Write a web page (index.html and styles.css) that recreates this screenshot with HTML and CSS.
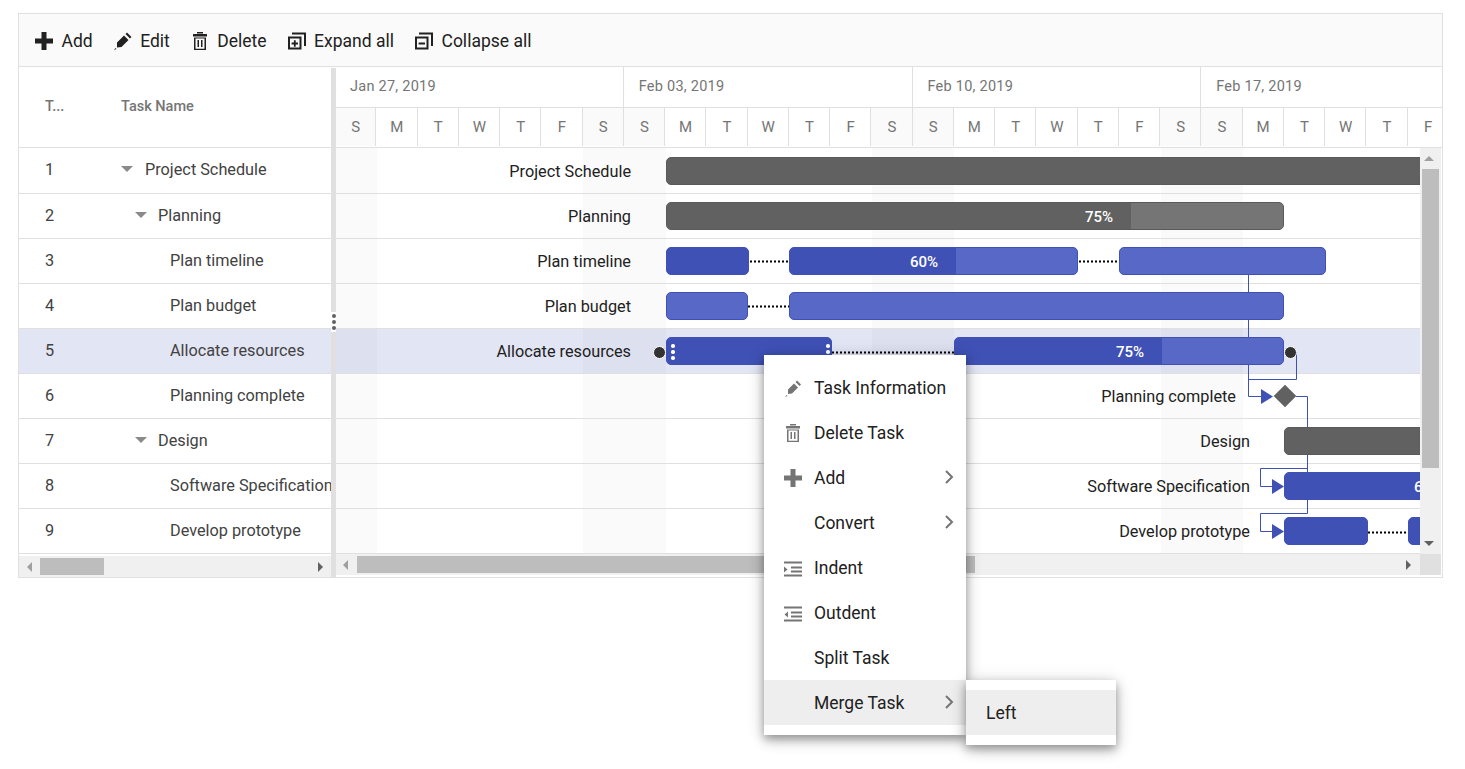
FILE: index.html
```html
<!DOCTYPE html>
<html lang="en">
<head>
<meta charset="utf-8">
<title>Gantt</title>
<link rel="stylesheet" href="styles.css">
</head>
<body>
<div class="gantt">
  <div class="toolbar">
    <div class="tool"><svg class="tool-icon" viewBox="0 0 18 18"><path d="M6.500 0h5v6.500H18v5h-6.500V18h-5v-6.500H0v-5h6.500z"/></svg><span>Add</span></div>
    <div class="tool"><svg class="tool-icon" viewBox="0 0 18 18"><path d="M3 10.500 10 3.500 14.500 8 7.500 15 3 15.500zM11.500 2 13 .500 17.500 5 16 6.500zM0 18l1.500-2 1 1z"/></svg><span>Edit</span></div>
    <div class="tool"><svg class="tool-icon" viewBox="0 0 18 18"><path fill-rule="evenodd" d="M6 0h6v1.500H6zM2 2h14v2.500H2zM3 5.500h12V18H3zM4.500 6.500V16.800h9V6.500zM6.500 8H8v7H6.500zM10 8h1.500v7H10z"/></svg><span>Delete</span></div>
    <div class="tool"><svg class="tool-icon" viewBox="0 0 18 18"><path fill-rule="evenodd" d="M0 4.500h13.500v13H0zM2 6.500v9h9.500v-9zM4 .5h14v13.500h-2V2.500H4zM5.900 8.200h1.800v2.400h2.300v1.800H7.700v2.400H5.900v-2.400H3.600v-1.800h2.300z"/></svg><span>Expand all</span></div>
    <div class="tool"><svg class="tool-icon" viewBox="0 0 18 18"><path fill-rule="evenodd" d="M0 4.500h13.500v13H0zM2 6.500v9h9.500v-9zM4 .5h14v13.500h-2V2.500H4zM3.600 10.600h6.400v1.800H3.600z"/></svg><span>Collapse all</span></div>
  </div>

  <div class="grid-pane">
    <div class="grid-head">
      <div class="col-id">T...</div>
      <div class="col-name">Task Name</div>
    </div>
    <div class="grid-rows">
      <div class="grow first"><div class="col-id">1</div><div class="col-name lvl0"><i class="caret"></i>Project Schedule</div></div>
      <div class="grow"><div class="col-id">2</div><div class="col-name lvl1"><i class="caret"></i>Planning</div></div>
      <div class="grow"><div class="col-id">3</div><div class="col-name lvl2">Plan timeline</div></div>
      <div class="grow"><div class="col-id">4</div><div class="col-name lvl2">Plan budget</div></div>
      <div class="grow selected"><div class="col-id">5</div><div class="col-name lvl2">Allocate resources</div></div>
      <div class="grow"><div class="col-id">6</div><div class="col-name lvl2">Planning complete</div></div>
      <div class="grow"><div class="col-id">7</div><div class="col-name lvl1"><i class="caret"></i>Design</div></div>
      <div class="grow"><div class="col-id">8</div><div class="col-name lvl2">Software Specification</div></div>
      <div class="grow"><div class="col-id">9</div><div class="col-name lvl2">Develop prototype</div></div>
    </div>
    <div class="hscroll grid-scroll">
      <i class="arrow-left"></i>
      <div class="thumb grid-thumb"></div>
      <i class="arrow-right"></i>
    </div>
  </div>

  <div class="splitter"><div class="grip"><b></b><b></b><b></b></div></div>

  <div class="chart-pane">
    <div class="timeline">
      <div class="tier-top">
        <div class="week">Jan 27, 2019</div>
        <div class="week">Feb 03, 2019</div>
        <div class="week">Feb 10, 2019</div>
        <div class="week">Feb 17, 2019</div>
      </div>
      <div class="tier-days">
        <div class="day off">S</div><div class="day">M</div><div class="day">T</div><div class="day">W</div><div class="day">T</div><div class="day">F</div><div class="day off">S</div>
        <div class="day off">S</div><div class="day">M</div><div class="day">T</div><div class="day">W</div><div class="day">T</div><div class="day">F</div><div class="day off">S</div>
        <div class="day off">S</div><div class="day">M</div><div class="day">T</div><div class="day">W</div><div class="day">T</div><div class="day">F</div><div class="day off">S</div>
        <div class="day off">S</div><div class="day">M</div><div class="day">T</div><div class="day">W</div><div class="day">T</div><div class="day">F</div>
      </div>
    </div>

    <div class="chart-body">
      <div class="canvas">
        <div class="weekend" style="left:0;width:41px"></div>
        <div class="weekend" style="left:247px;width:83px"></div>
        <div class="weekend" style="left:536px;width:82px"></div>
        <div class="weekend" style="left:825px;width:82px"></div>

        <div class="crows">
          <div class="crow first"></div><div class="crow"></div><div class="crow"></div><div class="crow"></div>
          <div class="crow selected"></div><div class="crow"></div><div class="crow"></div><div class="crow"></div><div class="crow"></div>
        </div>

        <svg class="links" viewBox="336 148 1084 406" width="1084" height="406">
          <g class="link">
            <path d="M1248.500 275V396.500H1262"/>
            <path d="M1296.500 352V379.500H1248.500"/>
            <path d="M1296 396.500H1307.500V513.500H1260.500V531.500H1273"/>
            <path d="M1307.500 468.500H1260.500V486.500H1273"/>
          </g>
          <g class="arrowheads">
            <path d="M1261 389l12 7.500-12 7.500z"/>
            <path d="M1272 479l12 7.500-12 7.500z"/>
            <path d="M1272 524l12 7.500-12 7.500z"/>
          </g>
          <g class="dots">
            <path d="M750 261.500h39M1079 261.500h40M748 306.500h41M832 352.500h122M1368 532.500h40"/>
          </g>
        </svg>

        <div class="label" style="right:789px;top:13px">Project Schedule</div>
        <div class="label" style="right:789px;top:58px">Planning</div>
        <div class="label" style="right:789px;top:103px">Plan timeline</div>
        <div class="label" style="right:789px;top:148px">Plan budget</div>
        <div class="label on-sel" style="right:789px;top:193px">Allocate resources</div>
        <div class="label" style="right:184px;top:238px">Planning complete</div>
        <div class="label" style="right:170px;top:283px">Design</div>
        <div class="label" style="right:170px;top:328px">Software Specification</div>
        <div class="label" style="right:170px;top:373px">Develop prototype</div>

        <div class="bar parent" style="left:330px;top:9px;width:800px"></div>
        <div class="bar parent rest" style="left:330px;top:54px;width:618px"><div class="fill" style="width:464px">75%</div></div>
        <div class="bar parent" style="left:948px;top:279px;width:500px"></div>

        <div class="bar child done" style="left:330px;top:99px;width:83px"></div>
        <div class="bar child" style="left:453px;top:99px;width:289px"><div class="fill" style="width:166px">60%</div></div>
        <div class="bar child" style="left:783px;top:99px;width:207px"></div>

        <div class="bar child" style="left:330px;top:144px;width:82px"></div>
        <div class="bar child" style="left:453px;top:144px;width:495px"></div>

        <div class="bar child done" style="left:330px;top:189px;width:166px">
          <i class="handle left"><b></b><b></b><b></b></i>
          <i class="handle right"><b></b><b></b><b></b></i>
        </div>
        <div class="bar child" style="left:618px;top:189px;width:330px"><div class="fill" style="width:207px">75%</div></div>

        <div class="bar child" style="left:948px;top:324px;width:400px"><div class="fill" style="width:175px">60%</div></div>
        <div class="bar child done" style="left:948px;top:369px;width:84px"></div>
        <div class="bar child done" style="left:1072px;top:369px;width:100px"></div>

        <div class="milestone" style="left:941px;top:240px"></div>
        <div class="conn" style="left:317px;top:198px"></div>
        <div class="conn" style="left:948px;top:198px"></div>
      </div>

      <div class="vscroll">
        <i class="arrow-up"></i>
        <div class="thumb vthumb"></div>
        <i class="arrow-down"></i>
      </div>
    </div>

    <div class="chart-foot">
      <div class="hscroll chart-scroll">
        <i class="arrow-left"></i>
        <div class="thumb chart-thumb"></div>
        <i class="arrow-right"></i>
      </div>
      <div class="corner"></div>
    </div>
  </div>
</div>

<div class="menu main-menu">
  <div class="mitem"><svg class="micon" viewBox="0 0 18 18"><path d="M4 10.500 10 4.500 14 8.500 8 14.500 4 15zM11.500 3 13 1.500 17 5.500 15.500 7zM1 18l1.500-2 1 1z"/></svg><span class="mtext">Task Information</span></div>
  <div class="mitem"><svg class="micon" viewBox="0 0 18 18"><path fill-rule="evenodd" d="M6 0h6v1.500H6zM2 2h14v2.500H2zM3 5.500h12V18H3zM4.500 6.500V16.800h9V6.500zM6.500 8H8v7H6.500zM10 8h1.500v7H10z"/></svg><span class="mtext">Delete Task</span></div>
  <div class="mitem"><svg class="micon" viewBox="0 0 18 18"><path d="M6.500 0h5v6.500H18v5h-6.500V18h-5v-6.500H0v-5h6.500z"/></svg><span class="mtext">Add</span><svg class="chev" viewBox="0 0 9 14"><path d="M1 1l6 6-6 6"/></svg></div>
  <div class="mitem"><span class="micon"></span><span class="mtext">Convert</span><svg class="chev" viewBox="0 0 9 14"><path d="M1 1l6 6-6 6"/></svg></div>
  <div class="mitem"><svg class="micon" viewBox="0 0 18 18"><path d="M0 2.500h18v2H0zM7 7.500h11v2H7zM7 11.500h11v2H7zM0 15.500h18v2H0zM0 7.500l3.500 3L0 13.500z"/></svg><span class="mtext">Indent</span></div>
  <div class="mitem"><svg class="micon" viewBox="0 0 18 18"><path d="M0 2.500h18v2H0zM7 7.500h11v2H7zM7 11.500h11v2H7zM0 15.500h18v2H0zM4 7.500.5 10.500 4 13.500z"/></svg><span class="mtext">Outdent</span></div>
  <div class="mitem"><span class="micon"></span><span class="mtext">Split Task</span></div>
  <div class="mitem hover"><span class="micon"></span><span class="mtext">Merge Task</span><svg class="chev" viewBox="0 0 9 14"><path d="M1 1l6 6-6 6"/></svg></div>
</div>
<div class="menu sub-menu">
  <div class="mitem hover sub-item"><span class="mtext">Left</span></div>
</div>
</body>
</html>
```

FILE: styles.css
```css
* { box-sizing: border-box; }
html, body { margin: 0; padding: 0; background: #fff; }
body {
  position: relative;
  height: 769px;
  overflow: hidden;
  padding: 13px 22px 0 18px;
  font-family: Roboto, "Liberation Sans", sans-serif;
  color: #212121;
}
i { display: block; font-style: normal; }

.gantt {
  display: grid;
  grid-template-columns: 312px 5px 1106px;
  grid-template-rows: 53px 510px;
  width: 1425px;
  height: 565px;
  border: 1px solid #e0e0e0;
}

/* toolbar */
.toolbar {
  grid-column: 1 / 4;
  display: flex;
  align-items: center;
  gap: 21px;
  padding: 1px 0 0 16px;
  background: #fafafa;
  border-bottom: 1px solid #e0e0e0;
  font-size: 17.5px;
}
.tool { display: flex; align-items: center; gap: 8.5px; color: #212121; }
.tool-icon { width: 18px; height: 18px; fill: #212121; flex: none; }

/* left grid */
.grid-pane { display: flex; flex-direction: column; min-width: 0; overflow: hidden; }
.grid-head {
  display: flex;
  align-items: center;
  height: 81px;
  flex: none;
  padding-bottom: 1px;
  border-bottom: 1px solid #e0e0e0;
  font-size: 14.5px;
  font-weight: 500;
  color: #757575;
}
.col-id { width: 102px; padding-left: 26px; flex: none; }
.col-name { flex: 1; min-width: 0; display: flex; align-items: center; white-space: nowrap; overflow: hidden; }
.grid-rows { flex: none; }
.grow {
  display: flex;
  align-items: center;
  height: 45px;
  padding-bottom: 2px;
  border-bottom: 1px solid #e0e0e0;
  font-size: 16.25px;
  color: #424242;
  white-space: nowrap;
}
.grow.first { height: 46px; padding-bottom: 3px; }
.grow.selected { background: #e2e5f4; }
.lvl1 { padding-left: 14px; }
.lvl2 { padding-left: 49px; }
.caret {
  width: 0; height: 0;
  margin-right: 12px;
  border-left: 6px solid transparent;
  border-right: 6px solid transparent;
  border-top: 6px solid #8a8a8a;
  flex: none;
}
.lvl1 .caret { margin-right: 11px; }

.splitter { position: relative; background: #e0e0e0; margin-top: 1px; }
.grip {
  position: absolute;
  left: 0;
  top: 244px;
  width: 5px;
  height: 20px;
  background: #fff;
  display: flex;
  flex-direction: column;
  align-items: center;
  justify-content: center;
  gap: 2px;
}
.grip b { width: 4px; height: 4px; border-radius: 50%; background: #616161; }

/* timeline */
.chart-pane { display: flex; flex-direction: column; min-width: 0; overflow: hidden; }
.timeline { height: 81px; flex: none; border-bottom: 1px solid #e0e0e0; overflow: hidden; color: #757575; }
.tier-top { display: flex; height: 41px; margin-left: -1px; border-bottom: 1px solid #e0e0e0; width: 1161px; }
.week {
  width: 288.75px;
  flex: none;
  padding: 11px 0 0 15px;
  border-right: 1px solid #e0e0e0;
  font-size: 14.5px;
  letter-spacing: 0.25px;
}
.tier-days { display: flex; height: 38px; margin-left: -1px; width: 1161px; }
.day {
  width: 41.25px;
  flex: none;
  display: flex;
  align-items: center;
  justify-content: center;
  padding-left: 1px;
  border-right: 1px solid #e0e0e0;
  font-size: 15px;
}
.day.off { background: #fafafa; }

/* chart */
.chart-body { display: flex; flex: none; height: 406px; }
.canvas { position: relative; width: 1084px; height: 406px; overflow: hidden; flex: none; }
.weekend { position: absolute; top: 0; bottom: 0; background: #fafafa; }
.crows { position: relative; }
.crow { height: 45px; border-bottom: 1px solid #e0e0e0; }
.crow.first { height: 46px; }
.crow.selected { background: rgba(63, 81, 181, 0.15); }
.links { position: absolute; left: 0; top: 0; }
.link path { fill: none; stroke: #3f51b5; stroke-width: 1; }
.arrowheads path { fill: #3f51b5; }
.dots path { fill: none; stroke: #000; stroke-width: 2; stroke-dasharray: 2 2; }

.label { position: absolute; font-size: 16.25px; line-height: 22px; color: #212121; white-space: nowrap; }
.bar {
  position: absolute;
  height: 28px;
  border-radius: 5px;
  border: 1px solid #3f51b5;
  overflow: hidden;
}
.parent { background: #616161; border-color: #5a5a5a; }
.parent.rest { background: #757575; }
.child { background: #5768c7; }
.child.done { background: #3f51b5; }
.fill {
  height: 100%;
  padding-right: 18px;
  background: #3f51b5;
  color: #fff;
  font-size: 15px;
  font-weight: 500;
  line-height: 28px;
  text-align: right;
}
.parent .fill { background: #616161; }
.handle { position: absolute; top: 6px; display: flex; flex-direction: column; gap: 2.500px; }
.handle b { width: 3.500px; height: 3.500px; border-radius: 50%; background: #fff; }
.handle.left { left: 4px; }
.handle.right { right: 1.500px; }

.milestone {
  position: absolute;
  width: 16px;
  height: 16px;
  background: #616161;
  transform: rotate(45deg);
}
.conn {
  position: absolute;
  width: 13px;
  height: 13px;
  border-radius: 50%;
  background: #333;
  border: 1px solid #fff;
}

/* scrollbars */
.thumb { background: #bdbdbd; }
.vscroll { position: relative; width: 21px; background: #f0f0f0; flex: none; }
.vthumb { position: absolute; left: 2px; top: 21px; width: 17px; height: 299px; }
.arrow-up, .arrow-down {
  position: absolute;
  left: 4px;
  width: 0; height: 0;
  border-left: 5px solid transparent;
  border-right: 5px solid transparent;
}
.arrow-up { top: 8px; border-bottom: 5px solid #a0a0a0; }
.arrow-down { bottom: 8px; border-top: 5px solid #616161; }

.hscroll { position: relative; background: #f0f0f0; }
.arrow-left, .arrow-right {
  position: absolute;
  top: 6px;
  width: 0; height: 0;
  border-top: 5px solid transparent;
  border-bottom: 5px solid transparent;
}
.arrow-left { left: 7px; border-right: 5px solid #a0a0a0; }
.arrow-right { right: 9px; border-left: 5px solid #616161; }
.grid-scroll { height: 21px; margin-top: 2px; }
.grid-scroll .arrow-left { left: 8px; }
.grid-scroll .arrow-right { right: 8px; }
.grid-thumb { position: absolute; left: 21px; top: 2px; width: 64px; height: 17px; }
.chart-foot { display: flex; height: 21px; flex: none; }
.chart-scroll { width: 1084px; height: 21px; }
.chart-thumb { position: absolute; left: 21px; top: 2px; width: 618px; height: 17px; }
.corner { width: 21px; height: 21px; background: #e0e0e0; flex: none; }

/* context menu */
.menu {
  position: absolute;
  background: #fff;
  padding: 10px 0;
  box-shadow: 0 4px 8px rgba(0,0,0,.28), 0 6px 14px rgba(0,0,0,.14), 0 1px 18px rgba(0,0,0,.12);
}
.main-menu { left: 764px; top: 355px; width: 202px; }
.sub-menu { left: 966px; top: 680px; width: 150px; }
.mitem {
  display: flex;
  align-items: center;
  height: 45px;
  padding: 0 12px 0 20px;
  font-size: 17.5px;
  color: #212121;
}
.mitem.hover { background: #eee; }
.micon { width: 18px; height: 18px; margin-right: 12px; fill: #757575; flex: none; display: block; }
.mtext { flex: 1; white-space: nowrap; }
.chev { width: 9px; height: 14px; margin-top: -1px; fill: none; stroke: #757575; stroke-width: 2; flex: none; }
```
